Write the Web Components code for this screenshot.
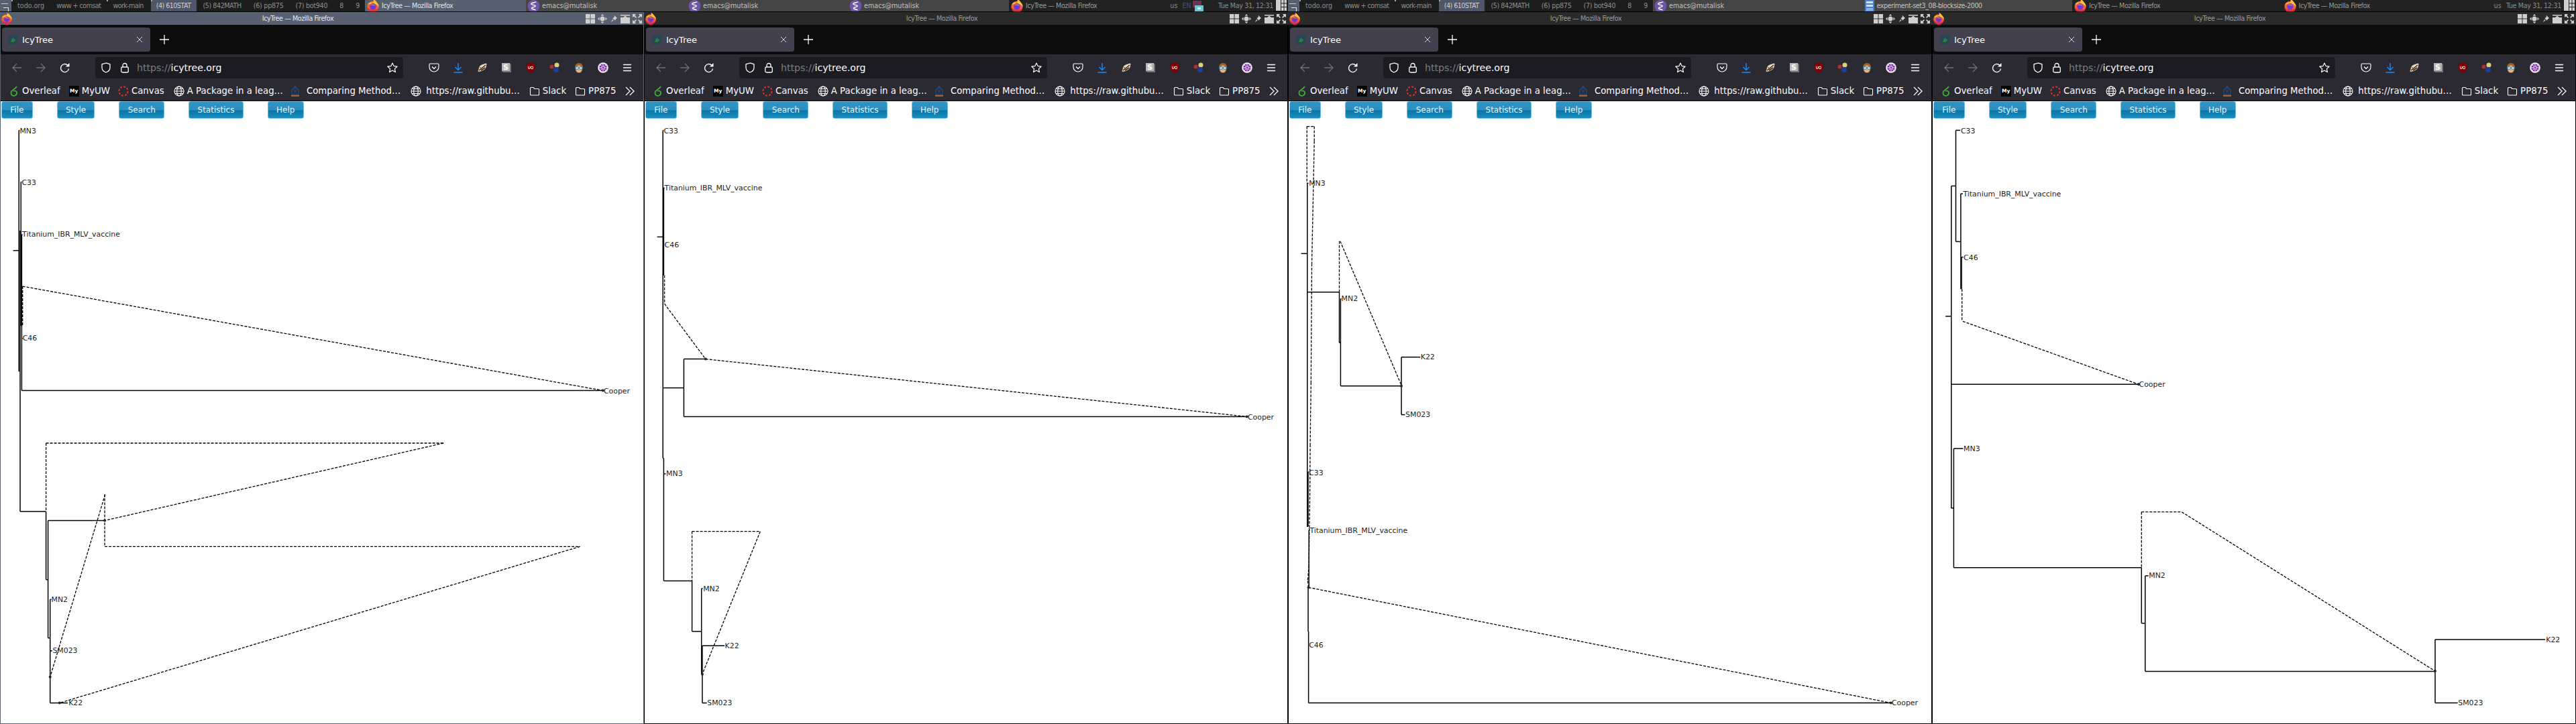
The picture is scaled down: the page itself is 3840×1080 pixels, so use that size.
<!DOCTYPE html>
<html>
<head>
<meta charset="utf-8">
<title>IcyTree wall</title>
<style>
  html, body { margin: 0; padding: 0; background: #000; }
  body { width: 3840px; height: 1080px; overflow: hidden; font-family: "DejaVu Sans", sans-serif; }
</style>
</head>
<body>
<wall-desktop>
  <wm-bar>
    <wm-pager></wm-pager>
    <wm-task icon="firefox" state="active" width="240">IcyTree — Mozilla Firefox</wm-task>
    <wm-task icon="emacs" state="busy" width="240">emacs@mutalisk</wm-task>
    <wm-task icon="emacs" state="busy" width="240">emacs@mutalisk</wm-task>
    <wm-task icon="emacs" state="busy" width="240">emacs@mutalisk</wm-task>
    <wm-task icon="firefox" state="idle" width="240">IcyTree — Mozilla Firefox</wm-task>
    <wm-tray lang-code="EN"></wm-tray>
  </wm-bar>
  <wm-bar>
    <wm-pager></wm-pager>
    <wm-task icon="emacs" state="busy" width="312.5">emacs@mutalisk</wm-task>
    <wm-task icon="file" state="busy" width="312.5">experiment-set3_08-blocksize-2000</wm-task>
    <wm-task icon="firefox" state="idle" width="312.5">IcyTree — Mozilla Firefox</wm-task>
    <wm-task icon="firefox" state="idle" width="312.5">IcyTree — Mozilla Firefox</wm-task>
    <wm-tray></wm-tray>
  </wm-bar>
  <ff-window focused><tree-view tree="0"></tree-view></ff-window>
  <ff-window><tree-view tree="1"></tree-view></ff-window>
  <ff-window><tree-view tree="2"></tree-view></ff-window>
  <ff-window><tree-view tree="3"></tree-view></ff-window>
</wall-desktop>

<script>
const ICONS = {
  firefox: `<svg viewBox="0 0 20 20" width="20" height="20"><circle cx="10" cy="11" r="8.6" fill="#f9612f"/><path d="M2 8C4 4 8 4 10 5c1-2 1-3 .5-5C13 1 15 3 16 5c2 2 2.600 4 2.600 6-3-4-8-6-16.600-3z" fill="#ffc13b"/><path d="M1.800 12c1 5 5 7.500 8.200 7.500 3.500 0 7-2 8.400-7-3 4-12 5-16.600-.5z" fill="#e8264d"/><circle cx="10" cy="10.800" r="4.800" fill="#6d3bd1"/><path d="M6 9c2-2 6-2 8 1-2-1-5-1.500-8-1z" fill="#f58a3c"/></svg>`,
  emacs: `<svg viewBox="0 0 20 20" width="19" height="20"><circle cx="10" cy="10" r="9.500" fill="#6f56ab"/><path d="M14 3.500 7 5.500c-1 .5-1 1.500 0 2l5 1.500c1 .5 1 1.500 0 2l-4.500 1.500c-1 .5-1 1.500 0 2l5.500 1.500" fill="none" stroke="#fff" stroke-width="1.500"/></svg>`,
  file: `<svg viewBox="0 0 16 20" width="16" height="20"><rect x="1" y="0" width="14" height="20" rx="2" fill="#4a7fd0"/><rect x="3" y="3" width="10" height="3" fill="#cfe0f5"/><rect x="3" y="8" width="10" height="3" fill="#cfe0f5"/><rect x="3" y="13" width="10" height="4" fill="#8db2e6"/></svg>`,
  back: `<svg viewBox="0 0 16 16" width="16" height="16"><path d="M15 8H2M8 2 2 8l6 6" fill="none" stroke="#6e6d75" stroke-width="1.400"/></svg>`,
  forward: `<svg viewBox="0 0 16 16" width="16" height="16"><path d="M1 8h13M8 2l6 6-6 6" fill="none" stroke="#6e6d75" stroke-width="1.400"/></svg>`,
  reload: `<svg viewBox="0 0 16 16" width="16" height="16"><path d="M13.500 9.500a6 6 0 1 1-1.700-5.200" fill="none" stroke="#fbfbfe" stroke-width="1.400"/><path d="M14.500 1v5.500H9z" fill="#fbfbfe"/></svg>`,
  shield: `<svg viewBox="0 0 16 16" width="16" height="16"><path d="M8 1 2 2.800v5C2 11.500 5 14 8 15c3-1 6-3.500 6-7.200v-5z" fill="none" stroke="#fbfbfe" stroke-width="1.300"/></svg>`,
  lock: `<svg viewBox="0 0 16 16" width="16" height="16"><rect x="2.700" y="7" width="10.600" height="8" rx="2" fill="none" stroke="#fbfbfe" stroke-width="1.300"/><path d="M5 7V4.500a3 3 0 0 1 6 0V7" fill="none" stroke="#fbfbfe" stroke-width="1.300"/></svg>`,
  star: `<svg viewBox="0 0 16 16" width="16" height="16"><path d="m8 1 2.100 4.600 5 .6-3.700 3.400 1 5L8 12.100l-4.400 2.500 1-5L.9 6.200l5-.6z" fill="none" stroke="#fbfbfe" stroke-width="1.200" stroke-linejoin="round"/></svg>`,
  pocket: `<svg viewBox="0 0 16 16" width="16" height="16"><path d="M2.500 2h11A1.500 1.500 0 0 1 15 3.500V7A7 7 0 0 1 1 7V3.500A1.500 1.500 0 0 1 2.500 2z" fill="none" stroke="#fbfbfe" stroke-width="1.200"/><path d="m5 6.500 3 3 3-3" fill="none" stroke="#fbfbfe" stroke-width="1.300"/></svg>`,
  download: `<svg viewBox="0 0 16 16" width="16" height="16"><path d="M8 1v10M3.500 7 8 11.500 12.500 7M1.500 15h13" fill="none" stroke="#1a8cff" stroke-width="1.400"/></svg>`,
  badger: `<svg viewBox="0 0 16 16" width="16" height="16"><path d="M1 14 3 7c1-3 6-5 12-6l-1 6c-1 4-8 8-13 7z" fill="#e9dcc6" stroke="#3b2a1c" stroke-width=".8"/><path d="M3 12 13 4M6 12l6-4" stroke="#3b2a1c" stroke-width="1.600"/><circle cx="5" cy="8" r="1" fill="#b9562b"/></svg>`,
  skey: `<svg viewBox="0 0 16 16" width="16" height="16"><path d="M1 1h12l2 2v12H3l-2-2z" fill="#6f6f6f"/><rect x="1" y="1" width="12" height="12" rx="1" fill="#b5b5b5"/><text x="7" y="11" text-anchor="middle" font-family="DejaVu Sans" font-weight="bold" font-size="11" fill="#fff">S</text></svg>`,
  ublock: `<svg viewBox="0 0 16 16" width="16" height="16"><path d="M8 .500 1.500 2.500v5C1.500 11.500 4.500 14.500 8 15.500c3.500-1 6.500-4 6.500-8v-5z" fill="#800000"/><path d="M4.500 6v2.500a1.300 1.300 0 0 0 2.600 0V6" fill="none" stroke="#fff" stroke-width="1"/><rect x="8.500" y="6" width="3" height="3.800" rx="1.400" fill="none" stroke="#fff" stroke-width="1"/></svg>`,
  balls: `<svg viewBox="0 0 16 16" width="16" height="16"><circle cx="11" cy="4" r="3.500" fill="#e8cf6a"/><circle cx="3.500" cy="6.500" r="3" fill="#b83228"/><circle cx="10" cy="11" r="4" fill="#1f3f8f"/></svg>`,
  face: `<svg viewBox="0 0 16 16" width="16" height="16"><path d="M2 8C2 3 5 1 8 1s6 2 6 7l-1 3H3z" fill="#a0642f"/><ellipse cx="8" cy="10" rx="5" ry="5.500" fill="#e3b07e"/><circle cx="5.200" cy="8.500" r="2.200" fill="#bfe6f7" stroke="#2b7fc4"/><circle cx="10.800" cy="8.500" r="2.200" fill="#bfe6f7" stroke="#2b7fc4"/></svg>`,
  wheel: `<svg viewBox="0 0 16 16" width="16" height="16"><circle cx="8" cy="8" r="7.800" fill="#f3eef9"/><circle cx="8" cy="8" r="5.800" fill="#7d2fa8"/><path d="M8 2.200v11.600M2.200 8h11.600M3.900 3.900l8.200 8.200M12.100 3.900l-8.200 8.200" stroke="#f3eef9"/><circle cx="8" cy="8" r="2" fill="#7d2fa8" stroke="#f3eef9" stroke-width=".8"/></svg>`,
  menu: `<svg viewBox="0 0 16 16" width="16" height="16"><path d="M2 3.500h12M2 8h12M2 12.500h12" stroke="#fbfbfe" stroke-width="1.400"/></svg>`,
  close: `<svg viewBox="0 0 12 12" width="12" height="12"><path d="m2 2 8 8M10 2l-8 8" stroke="#d4d4d8" stroke-width="1"/></svg>`,
  plus: `<svg viewBox="0 0 14 14" width="14" height="14"><path d="M7 0v14M0 7h14" stroke="#fbfbfe" stroke-width="1.300"/></svg>`,
  favicon: `<svg viewBox="0 0 16 16" width="15" height="15"><rect width="14" height="14" x="1" y="1" fill="#1f4a55"/><path d="M4 11 8 4l4 5-4 3z" fill="#2f7a3c"/></svg>`,
  overleaf: `<svg viewBox="0 0 16 16" width="16" height="16"><path d="M12 1C11 3 9 4.500 6.500 6 3 8 2.500 12 5 14s7 .5 7-3.500c0-2.500-2.500-4-5-2.500" fill="none" stroke="#4aa83a" stroke-width="1.800"/></svg>`,
  canvas: `<svg viewBox="0 0 16 16" width="16" height="16"><circle cx="8" cy="8" r="6.600" fill="none" stroke="#d9352a" stroke-width="1.900" stroke-dasharray="3.200 1.950"/></svg>`,
  globe: `<svg viewBox="0 0 16 16" width="16" height="16"><g fill="none" stroke="#fbfbfe" stroke-width="1.100"><circle cx="8" cy="8" r="7"/><ellipse cx="8" cy="8" rx="3.300" ry="7"/><path d="M1 8h14M2 4.500h12M2 11.500h12"/></g></svg>`,
  paper: `<svg viewBox="0 0 16 16" width="16" height="16"><path d="M8 1 3 7v6h10V7z" fill="none" stroke="#1d4f8c" stroke-width="1.300"/><path d="M8 5v6M6 8h4" stroke="#1d4f8c"/><rect x="2" y="14.200" width="12" height="1.500" fill="#d9772b"/></svg>`,
  folder: `<svg viewBox="0 0 16 16" width="16" height="16"><path d="M1.500 3.500A1 1 0 0 1 2.500 2.500h3.600L8 4.500h5.500a1 1 0 0 1 1 1v7.500a1 1 0 0 1-1 1h-11a1 1 0 0 1-1-1z" fill="none" stroke="#fbfbfe" stroke-width="1.100"/></svg>`,
  chevrons: `<svg viewBox="0 0 16 16" width="16" height="16"><path d="m2 2 6 6-6 6M8 2l6 6-6 6" fill="none" stroke="#fbfbfe" stroke-width="1.300"/></svg>`,
  wmGrid: `<svg viewBox="0 0 14 14" width="14" height="14" fill="#cfcfcf"><rect width="6.500" height="6.500"/><rect x="7.500" width="6.500" height="6.500"/><rect y="7.500" width="6.500" height="6.500"/><rect x="7.500" y="7.500" width="6.500" height="6.500"/></svg>`,
  wmMove: `<svg viewBox="0 0 14 14" width="14" height="14" fill="#cfcfcf"><circle cx="7" cy="7" r="3.500"/><path d="M7 0 9.500 2.500h-5zM7 14 4.500 11.500h5zM0 7 2.500 4.500v5zM14 7l-2.500-2.500v5z"/></svg>`,
  wmPin: `<svg viewBox="0 0 14 14" width="12" height="14" fill="#cfcfcf"><path d="m8 1 5 5-2 1-2 3-4-4 3-2zM5 8l1.500 1.500L2 13z"/></svg>`,
  wmShade: `<svg viewBox="0 0 14 14" width="14" height="14" fill="#cfcfcf"><rect y="5" width="14" height="9"/><rect y="1" width="14" height="1.500"/><path d="M7 2.500 10 5H4z"/></svg>`,
  wmMax: `<svg viewBox="0 0 14 14" width="14" height="14" fill="#cfcfcf"><path d="M0 0h5L3.500 2 6 5 5 6 2 3.500 0 5zM14 0v5l-2-1.500L9 6 8 5l2.500-3L9 0zM0 14V9l2 1.500L5 8l1 1-2.500 3L5 14zM14 14H9l1.500-2L8 9l1-1 3 2.500L14 9z"/></svg>`,
  pagerGrid: `<svg viewBox="0 0 16 16" width="16" height="16" fill="#cfcfcf"><rect width="7" height="16"/><rect x="8" width="3.500" height="4.500"/><rect x="12.500" width="3.500" height="4.500"/><rect x="8" y="5.500" width="3.500" height="4.500"/><rect x="12.500" y="5.500" width="3.500" height="4.500"/><rect x="8" y="11" width="3.500" height="5"/><rect x="12.500" y="11" width="3.500" height="5"/></svg>`,
  trayApp: `<svg viewBox="0 0 16 16" width="16" height="16"><rect y="0" width="13" height="10" fill="#6b3550"/><rect x="3" y="7" width="13" height="9" fill="#66c9cf"/><rect x="7" y="10" width="5" height="3" fill="#fff"/></svg>`
};

// quatre arbres, en coordonnées du zoom 960x910
const TREES = [
  {
    solid: "32 351 46 351, 46 42 46 662, 46 42 48 42, 49 300 49 1022, 51 175 51 545, 51 175 53 175, 53 310 53 711, 53 310 55 310, 53 577 55 577, 53 711 1468 711, 49 1022 112 1022, 112 1022 112 1197, 112 1197 117 1197, 117 1045 117 1347, 117 1045 255 1045, 117 1347 122 1347, 122 1248 122 1514, 122 1248 125 1248, 122 1380 127 1380, 122 1514 165 1514",
    dashed: "55 443 55 545, 55 443 1468 711, 112 846 112 1022, 112 846 1080 846, 1080 846 255 1045, 255 978 255 1112, 255 1112 1412 1112, 1412 1112 145 1514, 256 978 122 1447",
    dots: "1468 711, 255 1045, 122 1447, 145 1514",
    labels: [["MN3", 48, 43], ["C33", 53, 176], ["Titanium_IBR_MLV_vaccine", 54, 310], ["C46", 55, 577], ["Cooper", 1470, 712], ["MN2", 125, 1248], ["SM023", 128, 1380], ["K22", 167, 1514]]
  },
  {
    solid: "32 316 46 316, 46 42 46 885, 46 42 48 42, 48 190 48 415, 48 190 50 190, 46 704 97 704, 97 630 97 778, 97 630 150 630, 97 778 1468 778, 46 885 48 885, 48 885 48 1200, 48 925 53 925, 48 1200 117 1200, 117 1200 117 1330, 117 1330 140 1330, 140 1220 140 1440, 140 1220 143 1220, 142 1367 142 1514, 142 1367 196 1367, 142 1514 153 1514",
    dashed: "50 415 50 488, 50 488 150 630, 150 630 1468 778, 117 1073 117 1200, 117 1073 283 1073, 283 1073 142 1440",
    dots: "150 630, 1468 778, 142 1440",
    labels: [["C33", 48, 43], ["Titanium_IBR_MLV_vaccine", 50, 190], ["C46", 50, 336], ["Cooper", 1470, 779], ["MN3", 54, 925], ["MN2", 144, 1220], ["K22", 197, 1368], ["SM023", 154, 1514]]
  },
  {
    solid: "32 359 46 359, 47 178 47 1060, 47 178 50 178, 46 458 125 458, 125 458 125 588, 125 588 128 588, 128 475 128 699, 128 475 130 475, 128 699 276 699, 276 625 276 773, 276 625 322 625, 276 773 285 773, 46 1060 49 1060, 49 920 49 1060, 49 920 51 920, 51 1070 51 1217, 51 1070 53 1070, 49 1217 49 1330, 49 1330 50 1330, 50 1330 50 1514, 50 1366 51 1366, 50 1514 1468 1514",
    dashed: "46 32 46 178, 46 32 64 32, 64 32 64 70, 64 70 58 385, 58 385 57 540, 57 540 56 690, 56 690 54 850, 54 850 53 1005, 53 1005 52 1065, 52 1065 51 1160, 51 1160 48 1200, 48 1200 50 1217, 50 1217 1468 1514, 125 327 125 458, 127 327 275 695",
    dots: "276 699, 50 1217, 1468 1514",
    labels: [["MN3", 51, 179], ["MN2", 130, 475], ["K22", 323, 625], ["SM023", 286, 773], ["C33", 51, 922], ["Titanium_IBR_MLV_vaccine", 53, 1070], ["C46", 51, 1366], ["Cooper", 1470, 1514]]
  },
  {
    solid: "33 520 47 520, 47 185 47 1013, 47 185 57 185, 47 1013 53 1013, 58 42 58 328, 58 42 69 42, 58 328 69 328, 70 205 70 450, 70 205 75 205, 72 368 72 450, 72 368 76 368, 47 695 503 695, 53 860 76 860, 53 860 53 1166, 53 1166 510 1166, 510 1166 510 1309, 510 1309 519 1309, 519 1187 519 1433, 519 1187 527 1187, 519 1433 1225 1433, 1225 1351 1225 1514, 1225 1351 1493 1351, 1225 1514 1280 1514",
    dashed: "73 450 73 533, 75 533 503 695, 510 1023 510 1166, 510 1023 608 1023, 608 1023 1225 1432",
    dots: "503 695, 1225 1432",
    labels: [["C33", 70, 43], ["Titanium_IBR_MLV_vaccine", 76, 205], ["C46", 77, 369], ["Cooper", 504, 696], ["MN3", 77, 860], ["MN2", 528, 1187], ["K22", 1495, 1351], ["SM023", 1281, 1514]]
  }
];

class WallDesktop extends HTMLElement {
  connectedCallback() {
    this.attachShadow({ mode: "open" }).innerHTML = `
      <style>
        :host {
          display: grid;
          grid-template-columns: repeat(4, 960px);
          grid-template-rows: 18px 1062px;
          width: 3840px;
          height: 1080px;
        }
        ::slotted(wm-bar) { grid-column: span 2; }
      </style>
      <slot></slot>`;
  }
}

class WmBar extends HTMLElement {
  connectedCallback() {
    this.attachShadow({ mode: "open" }).innerHTML = `
      <style>
        :host {
          display: flex;
          height: 17px;
          background: #222;
          border-bottom: 1px solid #000;
          font-family: "DejaVu Sans", sans-serif;
          font-size: 9.6px;
          color: #999;
          overflow: hidden;
        }
      </style>
      <slot></slot>`;
  }
}

class WmPager extends HTMLElement {
  connectedCallback() {
    const names = [["todo.org", 0], ["www + comsat", -0.55], ["work-main", -0.6], ["(4) 610STAT", -0.55], ["(5) 842MATH", -0.45], ["(6) pp875", -0.25], ["(7) bot940", -0.3], ["8", 0], ["9", 0]];
    const spots = [0, 2, 3];
    this.attachShadow({ mode: "open" }).innerHTML = `
      <style>
        :host { display: flex; width: 544px; flex: none; background: #1d1d1d; }
        .layout { width: 17px; flex: none; background: #56606f; position: relative; }
        .layout::after {
          content: ""; position: absolute; left: 5px; top: 11px; width: 7px; height: 6px;
          border-top: 1px solid #dfe3ea; border-right: 1px solid #dfe3ea;
        }
        .layout::before {
          content: ""; position: absolute; left: 2px; top: 5px; width: 10px; height: 1px; background: #c7ccd4;
        }
        .ws { padding: 0 9px; line-height: 17px; white-space: nowrap; position: relative; color: #8d8d8d; }
        .ws:first-of-type { margin-left: 1px; }
        .ws.on { background: #4e5767; color: #cdd1d8; padding: 0 9px 0 8px; margin-left: 2px; }
        .ws.spot::before { content: ""; position: absolute; left: 0; top: 0; width: 2px; height: 2px; background: #aaa; }
      </style>
      <div class="layout"></div>
      ${names.map(([n, ls], i) => `<div class="ws ${i === 3 ? "on" : ""} ${spots.includes(i) ? "spot" : ""}" style="letter-spacing:${ls}px">${n}</div>`).join("")}`;
  }
}

class WmTask extends HTMLElement {
  connectedCallback() {
    const state = this.getAttribute("state");
    const w = this.getAttribute("width");
    const icon = this.getAttribute("icon");
    const bg = { active: "#56606f", busy: "#454545", idle: "#222" }[state];
    const col = { active: "#e0e3e8", busy: "#c4c4c4", idle: "#999" }[state];
    const ls = icon === "emacs" ? 0 : -0.44;
    this.attachShadow({ mode: "open" }).innerHTML = `
      <style>
        :host {
          display: flex; align-items: center; flex: none; gap: 3px;
          width: ${w}px; background: ${bg}; color: ${col}; letter-spacing: ${ls}px;
          padding-left: 2px; box-sizing: border-box; white-space: nowrap; overflow: hidden;
        }
        svg { flex: none; display: block; }
      </style>
      ${ICONS[icon]}<slot></slot>`;
  }
}

class WmTray extends HTMLElement {
  connectedCallback() {
    const code = this.getAttribute("lang-code");
    this.attachShadow({ mode: "open" }).innerHTML = `
      <style>
        :host { display: flex; align-items: center; margin-left: auto; white-space: nowrap; color: #8a8a8a; padding-right: 2px; }
        .us { margin-right: 7px; }
        .en { color: #3d4f9e; margin-right: 2px; }
        .app { margin: 0 22px 0 0; display: block; }
        .clock { letter-spacing: -0.35px; }
        .grid { margin-left: 4px; display: block; height: 17px; }
        svg { display: block; }
      </style>
      <span class="us">us</span>
      ${code ? `<span class="en">${code}</span><span class="app">${ICONS.trayApp}</span>` : ""}
      <span class="clock">Tue May 31, 12:31</span>
      <span class="grid">${ICONS.pagerGrid}</span>`;
  }
}

class FfWindow extends HTMLElement {
  connectedCallback() {
    const focused = this.hasAttribute("focused");
    const marks = [
      ["Overleaf", "overleaf", 12, 4], ["MyUW", "my", 13, 4], ["Canvas", "canvas", 12, 4],
      ["A Package in a leag…", "globe", 14, 4], ["Comparing Method…", "paper", 10, 9],
      ["https://raw.githubu…", "globe", 15, 7], ["Slack", "folder", 14, 4], ["PP875", "folder", 13, 4]
    ];
    const tools = ["pocket", "download", "badger", "skey", "ublock", "balls", "face", "wheel", "menu"];
    this.attachShadow({ mode: "open" }).innerHTML = `
      <style>
        :host {
          display: flex; flex-direction: column; height: 1062px; width: 960px; box-sizing: border-box;
          border-left: 1px solid ${focused ? "#56606f" : "#000"};
          border-right: 1px solid ${focused ? "#56606f" : "#000"};
          border-bottom: 1px solid ${focused ? "#56606f" : "#000"};
          font-family: "DejaVu Sans", sans-serif; background: #fff;
        }
        svg { display: block; flex: none; }
        .title {
          height: 19px; flex: none; display: flex; align-items: center; position: relative;
          background: ${focused ? "#56606f" : "#2a2a2a"}; color: ${focused ? "#e6e8ec" : "#9a9a9a"};
          font-size: 9.6px; margin: 0 -1px;
        }
        .title .name { flex: 1; text-align: center; padding-right: 4px; white-space: nowrap; letter-spacing: -0.44px; }
        .title .ffi { margin-left: 1px; width: 18px; }
        .title .ffi svg { width: 18px; height: 18px; }
        .wbtn { display: flex; gap: 4px; align-items: center; padding-right: 3px; }
        .tabs { height: 44px; flex: none; background: #0c0c0d; display: flex; align-items: center; padding-left: 2px; }
        .tab {
          width: 221px; height: 36px; box-sizing: border-box; background: #42414d; border-radius: 4px;
          display: flex; align-items: center; padding: 0 10px 0 9px; color: #fbfbfe; font-size: 13.100px;
        }
        .tab .t { margin-left: 6px; flex: 1; }
        .plus { margin-left: 14px; }
        .bar { height: 40px; flex: none; background: #2b2a33; display: flex; align-items: center; padding-left: 6px; }
        .nav { width: 36px; height: 32px; display: flex; align-items: center; justify-content: center; flex: none; }
        .url {
          width: 459px; height: 32px; margin-left: 27px; background: #1c1b22; border-radius: 4px; flex: none;
          display: flex; align-items: center; padding: 0 8px 0 8px; box-sizing: border-box;
          color: #fbfbfe; font-size: 14.100px;
        }
        .url .lock { margin-left: 12px; }
        .url .txt { margin-left: 10px; flex: 1; white-space: nowrap; }
        .url .dim { color: #7d7c83; }
        .tools { display: flex; margin-left: 28px; }
        .marks {
          height: 29px; flex: none; background: #2b2a33; display: flex; align-items: center;
          color: #fbfbfe; font-size: 13.300px; white-space: nowrap; border-bottom: 1px solid #0a0a0a;
        }
        .mark { display: flex; align-items: center; flex: none; }
        .my {
          width: 15px; height: 16px; background: #000; color: #fff; font-size: 7.500px; font-weight: bold;
          display: flex; align-items: center; justify-content: center;
        }
        .more { margin-left: 12px; }
        .content { flex: 1; min-height: 0; display: flex; flex-direction: column; background: #fff; }
      </style>
      <div class="title">
        <span class="ffi">${ICONS.firefox}</span>
        <span class="name">IcyTree — Mozilla Firefox</span>
        <span class="wbtn">${ICONS.wmGrid}${ICONS.wmMove}${ICONS.wmPin}${ICONS.wmShade}${ICONS.wmMax}</span>
      </div>
      <div class="tabs">
        <div class="tab">${ICONS.favicon}<span class="t">IcyTree</span>${ICONS.close}</div>
        <span class="plus">${ICONS.plus}</span>
      </div>
      <div class="bar">
        <span class="nav">${ICONS.back}</span><span class="nav">${ICONS.forward}</span><span class="nav">${ICONS.reload}</span>
        <div class="url">
          ${ICONS.shield}<span class="lock">${ICONS.lock}</span>
          <span class="txt"><span class="dim">https://</span>icytree.org</span>${ICONS.star}
        </div>
        <div class="tools">${tools.map((t) => `<span class="nav">${ICONS[t]}</span>`).join("")}</div>
      </div>
      <div class="marks">
        ${marks.map(([label, ic, before, gap]) => {
          const glyph = ic === "my" ? `<span class="my">My</span>` : ICONS[ic];
          return `<span class="mark" style="margin-left:${before}px;gap:${gap}px">${glyph}<span>${label}</span></span>`;
        }).join("")}
        <span class="more">${ICONS.chevrons}</span>
      </div>
      <div class="content">
        <icy-menu></icy-menu>
        <slot></slot>
      </div>`;
  }
}

class IcyMenu extends HTMLElement {
  connectedCallback() {
    const items = ["File", "Style", "Search", "Statistics", "Help"];
    this.attachShadow({ mode: "open" }).innerHTML = `
      <style>
        :host { display: flex; gap: 36px; flex: none; height: 27px; padding-left: 1px; font-family: "DejaVu Sans", sans-serif; }
        button {
          height: 26px; padding: 0 12.300px; border: 1px solid #6cc4ea; border-radius: 3px; font: 12px "DejaVu Sans", sans-serif;
          color: #e6f3f9; background: linear-gradient(#2f93c2 0, #2c8fbf 50%, #0a76a8 54%, #1a8dbe 100%);
        }
      </style>
      ${items.map((i) => `<button type="button">${i}</button>`).join("")}`;
  }
}

class TreeView extends HTMLElement {
  connectedCallback() {
    const t = TREES[Number(this.getAttribute("tree"))];
    const fx = (x) => (x / 1.6333 - 1).toFixed(1);
    const fy = (y) => (170 + y / 1.7231 - 178).toFixed(1);
    const lines = (s) => s.split(",").map((c) => {
      const [a, b, d, e] = c.trim().split(" ").map(Number);
      return `x1="${fx(a)}" y1="${fy(b)}" x2="${fx(d)}" y2="${fy(e)}"`;
    });
    this.attachShadow({ mode: "open" }).innerHTML = `
      <style>
        :host { display: block; flex: 1; min-height: 0; }
        svg { display: block; overflow: hidden; }
        line { stroke: #000; stroke-width: 1.5; }
        .d { stroke-dasharray: 4 2; stroke-width: 1.3; }
        text { font: 10.900px "DejaVu Sans", sans-serif; fill: #222; dominant-baseline: central; }
      </style>
      <svg width="958" height="901">
        ${lines(t.solid).map((l) => `<line ${l}/>`).join("")}
        ${lines(t.dashed).map((l) => `<line class="d" ${l}/>`).join("")}
        ${t.dots.split(",").map((c) => {
          const [x, y] = c.trim().split(" ").map(Number);
          return `<circle cx="${fx(x)}" cy="${fy(y)}" r="2" fill="#222"/>`;
        }).join("")}
        ${t.labels.map(([s, x, y]) => `<text x="${fx(x)}" y="${fy(y)}">${s}</text>`).join("")}
      </svg>`;
  }
}

customElements.define("wall-desktop", WallDesktop);
customElements.define("wm-bar", WmBar);
customElements.define("wm-pager", WmPager);
customElements.define("wm-task", WmTask);
customElements.define("wm-tray", WmTray);
customElements.define("ff-window", FfWindow);
customElements.define("icy-menu", IcyMenu);
customElements.define("tree-view", TreeView);
</script>
</body>
</html>
